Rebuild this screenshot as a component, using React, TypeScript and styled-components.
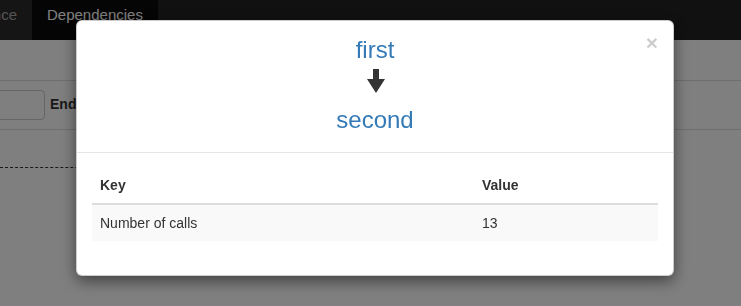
import styled, { createGlobalStyle } from "styled-components"

const GlobalStyle = createGlobalStyle`
    html, body {
        margin: 0;
        padding: 0;
        background: #ffffff;
        font-family: "Liberation Sans", Arial, sans-serif;
        font-size: 14px;
        line-height: 1.42857;
        color: #333333;
    }
`

const Navbar = styled.div`
    height: 40px;
    background: #222222;
    display: flex;
`

const NavTab = styled.div<{ $active?: boolean, $clipped?: boolean }>`
    box-sizing: border-box;
    height: 40px;
    padding: 5px 15px 0;
    line-height: 20px;
    font-size: 15px;
    white-space: nowrap;
    color: ${p => p.$active ? "#ffffff" : "#aaaaaa"};
    background: ${p => p.$active ? "#0a0a0a" : "#2a2a2a"};
    ${p => p.$clipped && `
        width: 32px;
        padding-left: 0;
        overflow: hidden;
        direction: rtl;
    `}
`

const Toolbar = styled.div`
    height: 40px;
    border-bottom: 1px solid #dddddd;
`

const FilterRow = styled.div`
    display: flex;
    align-items: center;
    gap: 5px;
    height: 48px;
    border-bottom: 1px solid #dddddd;
`

const Input = styled.div`
    width: 60px;
    height: 28px;
    margin-left: -17px;
    border: 1px solid #cccccc;
    border-radius: 4px;
`

const Label = styled.span`
    font-weight: bold;
    font-size: 14px;
`

const ResultLine = styled.div`
    width: 400px;
    margin-top: 37px;
    border-top: 1px dashed #333333;
`

const Backdrop = styled.div`
    position: fixed;
    inset: 0;
    background: rgba(0, 0, 0, 0.5);
`

const Modal = styled.div`
    position: fixed;
    top: 20px;
    left: 76px;
    width: 596px;
    background: #ffffff;
    border: 1px solid rgba(0, 0, 0, 0.2);
    border-radius: 6px;
    box-shadow: 0 5px 15px rgba(0, 0, 0, 0.5);
`

const ModalHeader = styled.div`
    position: relative;
    padding: 16px 15px 19px;
    border-bottom: 1px solid #e5e5e5;
    display: flex;
    flex-direction: column;
    align-items: center;
`

const ServiceName = styled.div`
    font-size: 24px;
    line-height: 26px;
    color: #337ab7;
`

const Arrow = styled.svg`
    display: block;
    margin: 6px 0 14px 2px;
`

const Close = styled.span`
    position: absolute;
    top: 11px;
    right: 15px;
    font-size: 21px;
    font-weight: bold;
    line-height: 1;
    color: #000000;
    opacity: 0.2;
`

const ModalBody = styled.div`
    padding: 14px 15px 14px;
`

const Table = styled.table`
    width: 100%;
    border-collapse: collapse;
    margin-bottom: 20px;
`

const HeaderCell = styled.th`
    text-align: left;
    padding: 8px;
    line-height: 20px;
    border-bottom: 2px solid #dddddd;
    width: ${p => p.width || "auto"};
`

const BodyRow = styled.tr`
    background: #f9f9f9;
`

const BodyCell = styled.td`
    padding: 8px;
    line-height: 20px;
`

const App = () => {
    return <>
        <GlobalStyle />
        <Navbar>
            <NavTab $clipped>Instance</NavTab>
            <NavTab $active>Dependencies</NavTab>
        </Navbar>
        <Toolbar />
        <FilterRow>
            <Input />
            <Label>End</Label>
        </FilterRow>
        <ResultLine />
        <Backdrop />
        <Modal>
            <ModalHeader>
                <Close>×</Close>
                <ServiceName>first</ServiceName>
                <Arrow width="18" height="24" viewBox="0 0 18 24">
                    <path d="M6 0 H12 V10 H18 L9 24 L0 10 H6 Z" fill="#333333" />
                </Arrow>
                <ServiceName>second</ServiceName>
            </ModalHeader>
            <ModalBody>
                <Table>
                    <thead>
                        <tr>
                            <HeaderCell width="366px">Key</HeaderCell>
                            <HeaderCell>Value</HeaderCell>
                        </tr>
                    </thead>
                    <tbody>
                        <BodyRow>
                            <BodyCell>Number of calls</BodyCell>
                            <BodyCell>13</BodyCell>
                        </BodyRow>
                    </tbody>
                </Table>
            </ModalBody>
        </Modal>
    </>
}

export default App
